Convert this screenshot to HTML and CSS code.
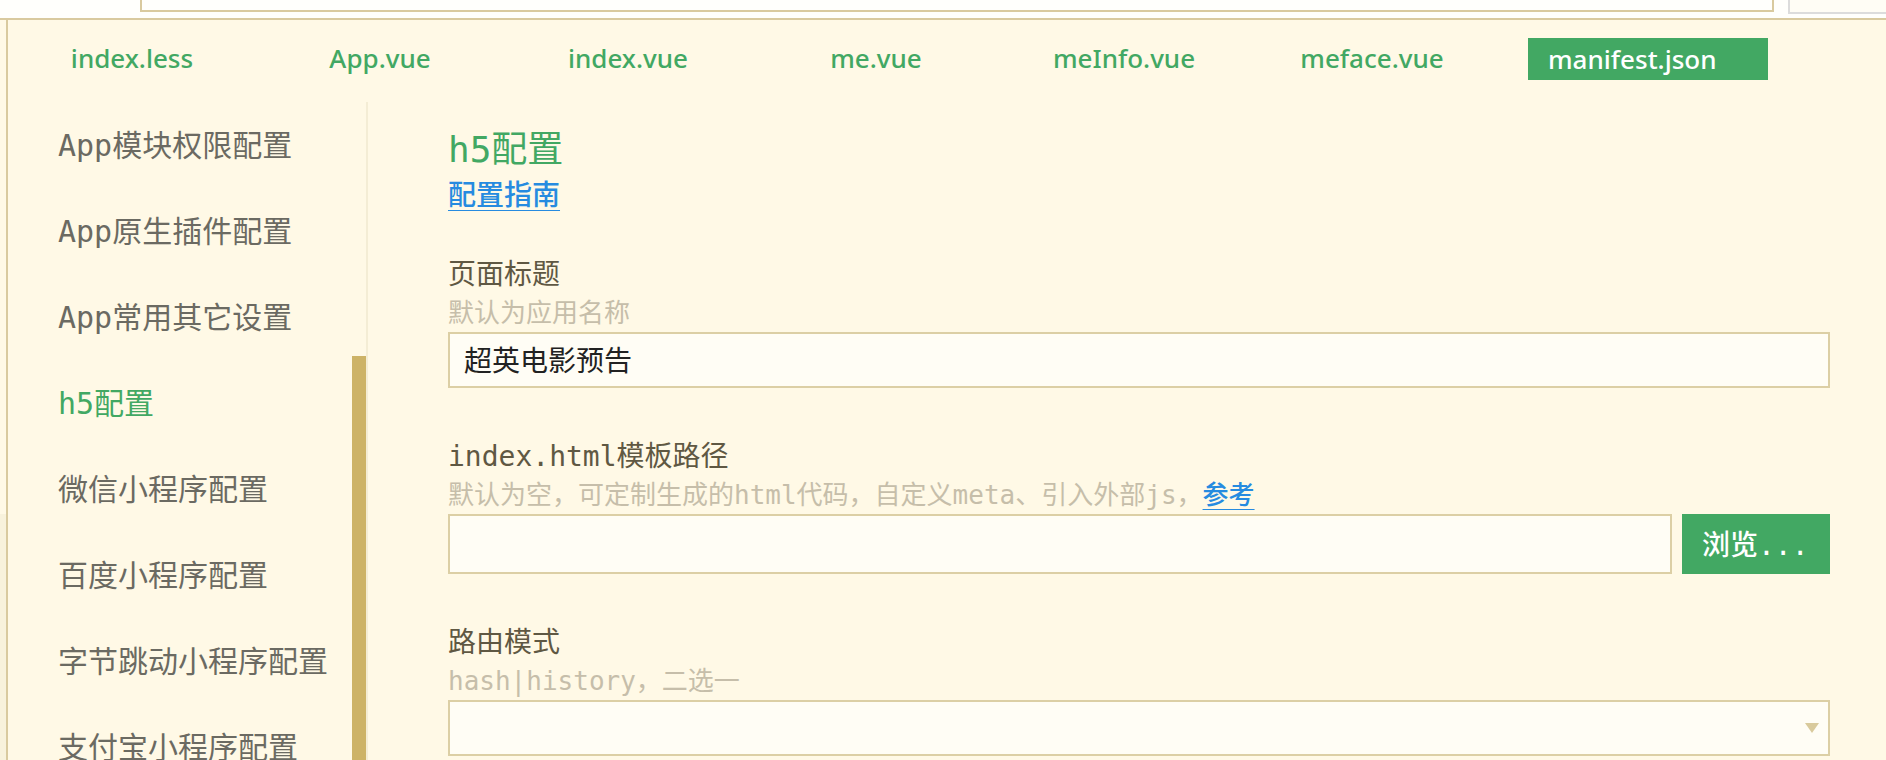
FILE: index.html
```html
<!DOCTYPE html>
<html lang="zh-CN">
<head>
<meta charset="utf-8">
<title>manifest.json</title>
<link rel="stylesheet" href="styles.css">
</head>
<body>
<header class="toolbar">
  <div class="toolbar-field"></div>
  <div class="toolbar-side"></div>
</header>
<div class="workspace">
  <div class="gutter"><div class="gutter-shade"></div></div>
  <main class="editor">
    <nav class="tabs">
      <button class="tab" type="button">index.less</button>
      <button class="tab" type="button">App.vue</button>
      <button class="tab" type="button">index.vue</button>
      <button class="tab" type="button">me.vue</button>
      <button class="tab" type="button">meInfo.vue</button>
      <button class="tab" type="button">meface.vue</button>
      <button class="tab tab-active" type="button">manifest.json</button>
    </nav>
    <div class="panes">
      <aside class="sidebar">
        <nav class="menu">
          <a class="menu-item" href="#">App模块权限配置</a>
          <a class="menu-item" href="#">App原生插件配置</a>
          <a class="menu-item" href="#">App常用其它设置</a>
          <a class="menu-item menu-item-active" href="#">h5配置</a>
          <a class="menu-item" href="#">微信小程序配置</a>
          <a class="menu-item" href="#">百度小程序配置</a>
          <a class="menu-item" href="#">字节跳动小程序配置</a>
          <a class="menu-item" href="#">支付宝小程序配置</a>
        </nav>
        <div class="scroll-track"><div class="scroll-thumb"></div></div>
      </aside>
      <form class="settings">
        <h1 class="title">h5配置</h1>
        <p class="guide"><a class="link" href="#">配置指南</a></p>
        <div class="field">
          <label class="label" for="page-title">页面标题</label>
          <p class="hint">默认为应用名称</p>
          <input class="control" id="page-title" type="text" value="超英电影预告">
        </div>
        <div class="field">
          <label class="label" for="template">index.html模板路径</label>
          <p class="hint">默认为空，可定制生成的html代码，自定义meta、引入外部js，<a class="link" href="#">参考</a></p>
          <div class="row">
            <input class="control control-tall" id="template" type="text">
            <button class="browse" type="button">浏览...</button>
          </div>
        </div>
        <div class="field">
          <label class="label" for="router">路由模式</label>
          <p class="hint">hash|history，二选一</p>
          <div class="select-box">
            <select class="control" id="router">
              <option value=""></option>
              <option value="hash">hash</option>
              <option value="history">history</option>
            </select>
            <svg class="arrow" width="14" height="10" viewBox="0 0 14 10" aria-hidden="true"><path d="M0 0H14L7 10Z" fill="#d9ca9c"/></svg>
          </div>
        </div>
      </form>
    </div>
  </main>
</div>
</body>
</html>
```
FILE: styles.css
```css
* {
  box-sizing: border-box;
}

body {
  margin: 0;
  height: 100vh;
  overflow: hidden;
  display: flex;
  flex-direction: column;
  background: #fff9e6;
  font-family: "DejaVu Sans Mono", "Noto Sans CJK SC", monospace;
  font-size: 28px;
}

h1,
p {
  margin: 0;
  font-weight: 400;
}

button {
  border: 0;
  font: inherit;
}

.toolbar {
  flex: none;
  display: flex;
  align-items: flex-start;
  gap: 14px;
  height: 20px;
  padding-left: 140px;
  background: #fffffc;
  border-bottom: 2px solid #d9ca9f;
}

.toolbar-field {
  flex: 1;
  height: 12px;
  border: 2px solid #d9ca9f;
  border-top: 0;
}

.toolbar-side {
  width: 98px;
  height: 14px;
  background: #fffdf5;
  border: 2px solid #dcdcdc;
  border-top: 0;
  border-right: 0;
}

.workspace {
  flex: 1;
  min-height: 0;
  display: flex;
}

.gutter {
  flex: none;
  width: 8px;
  padding-top: 494px;
  border-right: 2px solid #d9ca9f;
}

.gutter-shade {
  height: 100%;
  background: #f8f2dc;
}

.editor {
  flex: 1;
  min-width: 0;
  display: flex;
  flex-direction: column;
}

.tabs {
  flex: none;
  display: flex;
  padding: 18px 0 22px;
}

.tab {
  flex: 0 1 248px;
  height: 42px;
  padding: 0 0 2px;
  background: none;
  color: #42a863;
  font-family: "Noto Sans", sans-serif;
  font-size: 26px;
  font-weight: 500;
  line-height: 40px;
}

.tab-active {
  flex-basis: 240px;
  margin-left: 32px;
  padding: 0 0 0 20px;
  background: #42a863;
  color: #fff;
  text-align: left;
}

.panes {
  flex: 1;
  min-height: 0;
  display: flex;
}

.sidebar {
  flex: none;
  width: 360px;
  display: flex;
  overflow: hidden;
  border-right: 2px solid #f4edd5;
}

.menu {
  flex: 1;
  padding: 1px 0 0 50px;
}

.menu-item {
  display: block;
  color: #6b6a62;
  font-size: 30px;
  line-height: 86px;
  white-space: nowrap;
  text-decoration: none;
}

.menu-item-active {
  color: #42a863;
}

.scroll-track {
  width: 14px;
  padding-top: 254px;
}

.scroll-thumb {
  height: 100%;
  background: #cdb367;
}

.settings {
  flex: 1;
  min-width: 0;
  padding: 24px 56px 0 80px;
}

.title {
  color: #42a863;
  font-size: 36px;
  line-height: 48px;
}

.guide {
  margin-bottom: 38px;
  line-height: 44px;
}

.link {
  color: #268be0;
  font-weight: 500;
  text-decoration-thickness: 1px;
  text-underline-offset: 5px;
}

.field {
  margin-bottom: 50px;
}

.label {
  display: block;
  color: #5f5843;
  line-height: 38px;
}

.hint {
  color: #c6beaa;
  font-size: 26px;
  line-height: 38px;
}

.control {
  display: block;
  width: 100%;
  height: 56px;
  padding: 0 14px 2px;
  appearance: none;
  background: #fffdf5;
  border: 2px solid #dccfa5;
  border-radius: 0;
  color: #222;
  font: inherit;
}

.row {
  display: flex;
  gap: 10px;
}

.control-tall {
  flex: 1;
  min-width: 0;
  height: 60px;
}

.browse {
  flex: none;
  width: 148px;
  padding: 0 20px 2px;
  background: #42a863;
  color: #fff;
  font-weight: 500;
  text-align: left;
}

.select-box {
  position: relative;
}

.arrow {
  position: absolute;
  top: 23px;
  right: 11px;
  pointer-events: none;
}
```
